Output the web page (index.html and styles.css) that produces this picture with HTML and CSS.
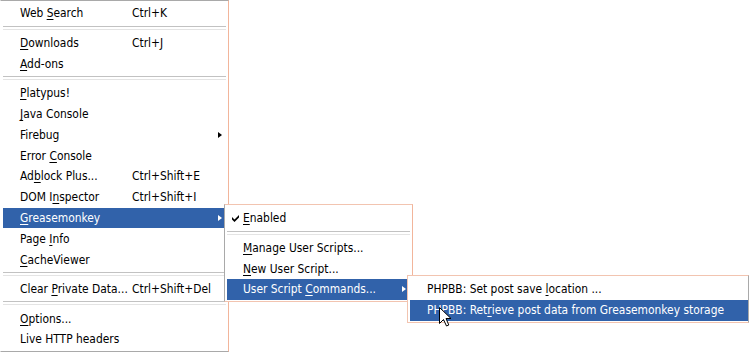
FILE: index.html
```html
<!DOCTYPE html>
<html>
<head>
<meta charset="utf-8">
<link rel="stylesheet" href="styles.css">
</head>
<body>
<div class="stage">
  <div class="menu main">
    <div class="item"><span class="label">Web <u>S</u>earch</span><span class="key">Ctrl+K</span></div>
    <div class="sep"></div>
    <div class="item"><span class="label"><u>D</u>ownloads</span><span class="key">Ctrl+J</span></div>
    <div class="item"><span class="label"><u>A</u>dd-ons</span></div>
    <div class="sep"></div>
    <div class="item"><span class="label"><u>P</u>latypus!</span></div>
    <div class="item"><span class="label"><u>J</u>ava Console</span></div>
    <div class="item"><span class="label">Firebug</span><span class="arrow"></span></div>
    <div class="item"><span class="label">Error <u>C</u>onsole</span></div>
    <div class="item"><span class="label">Ad<u>b</u>lock Plus...</span><span class="key">Ctrl+Shift+E</span></div>
    <div class="item"><span class="label">DOM I<u>n</u>spector</span><span class="key">Ctrl+Shift+I</span></div>
    <div class="item active"><span class="label"><u>G</u>reasemonkey</span><span class="arrow"></span></div>
    <div class="item"><span class="label">Page <u>I</u>nfo</span></div>
    <div class="item"><span class="label"><u>C</u>acheViewer</span></div>
    <div class="sep"></div>
    <div class="item"><span class="label">Clear <u>P</u>rivate Data...</span><span class="key">Ctrl+Shift+Del</span></div>
    <div class="sep"></div>
    <div class="item"><span class="label"><u>O</u>ptions...</span></div>
    <div class="item"><span class="label">Live HTTP headers</span></div>
  </div>

  <div class="menu sub1">
    <div class="item"><svg class="check" width="7" height="8" viewBox="0 0 7 8"><polygon points="0,3 2.5,5.5 7,1 7,3.6 2.5,8 0,5.5"/></svg><span class="label"><u>E</u>nabled</span></div>
    <div class="sep"></div>
    <div class="item"><span class="label"><u>M</u>anage User Scripts...</span></div>
    <div class="item"><span class="label"><u>N</u>ew User Script...</span></div>
    <div class="item active"><span class="label">User Script <u>C</u>ommands...</span><span class="arrow"></span></div>
  </div>

  <div class="menu sub2">
    <div class="item"><span class="label">PHPBB: Set post save <u>l</u>ocation ...</span></div>
    <div class="item active"><span class="label">PHPBB: Ret<u>r</u>ieve post data from Greasemonkey storage</span></div>
  </div>

  <svg class="cursor" width="13" height="21" viewBox="0 0 13 21">
    <path d="M0.5 0.5 L0.5 16.5 L4.5 12.5 L7.5 19 L9.8 18 L7 11.5 L12 11.5 Z" fill="#fff" stroke="#000" stroke-width="1" stroke-linejoin="miter"/>
  </svg>
</div>
</body>
</html>
```

FILE: styles.css
```css
* { box-sizing: border-box; }
html, body { margin: 0; padding: 0; background: #fff; }
body {
  font-family: "DejaVu Sans Condensed", "DejaVu Sans", sans-serif;
  font-stretch: condensed;
  font-size: 11.9px;
  color: #000;
}
.stage { position: relative; width: 750px; height: 352px; overflow: hidden; }

.menu { background: #fff; display: flex; flex-direction: column; }

.main {
  width: 229px;
  border-top: 1px solid #a9a9a9;
  border-left: 1px solid #fff;
  border-right: 1px solid #f2b59b;
  border-bottom: 1px solid #a9a9a9;
  padding: 2px 2px 1px 2px;
}

.item {
  height: 20.8px;
  display: flex;
  align-items: center;
  padding-left: 17px;
  white-space: nowrap;
}
.main .label { min-width: 112px; }
.label u { text-underline-offset: 2px; }

.arrow {
  margin-left: auto;
  margin-right: 4px;
  width: 0; height: 0;
  border-left: 4px solid #000;
  border-top: 3.5px solid transparent;
  border-bottom: 3.5px solid transparent;
}
.active { background: #3162aa; color: #fff; }
.active .arrow { border-left-color: #fff; }

.sep { height: 8.7px; padding-top: 2px; }
.sep::before {
  content: "";
  display: block;
  height: 2px;
  border-top: 1px solid #c2c2c2;
  border-bottom: 1px solid #e4e4e4;
}

.sub1 {
  position: absolute;
  left: 224px; top: 204px;
  width: 189px;
  border-left: 1px solid #a9a9a9;
  border-top: 1px solid #f2c4b0;
  border-right: 1px solid #f2b59b;
  border-bottom: 1px solid #f2c4b0;
  padding: 3px 2px 1px 2px;
}
.sub1 .item { padding-left: 16px; }
.check { margin-left: -11px; margin-right: 4px; fill: #000; }

.sub2 {
  position: absolute;
  left: 407px; top: 275px;
  width: 342px;
  border-left: 1px solid #f2c4b0;
  border-top: 1px solid #f2c4b0;
  border-right: 1px solid #a9a9a9;
  border-bottom: 1px solid #f2c4b0;
  padding: 3px 0 1px 2px;
}

.cursor { position: absolute; left: 439px; top: 307px; }
```
